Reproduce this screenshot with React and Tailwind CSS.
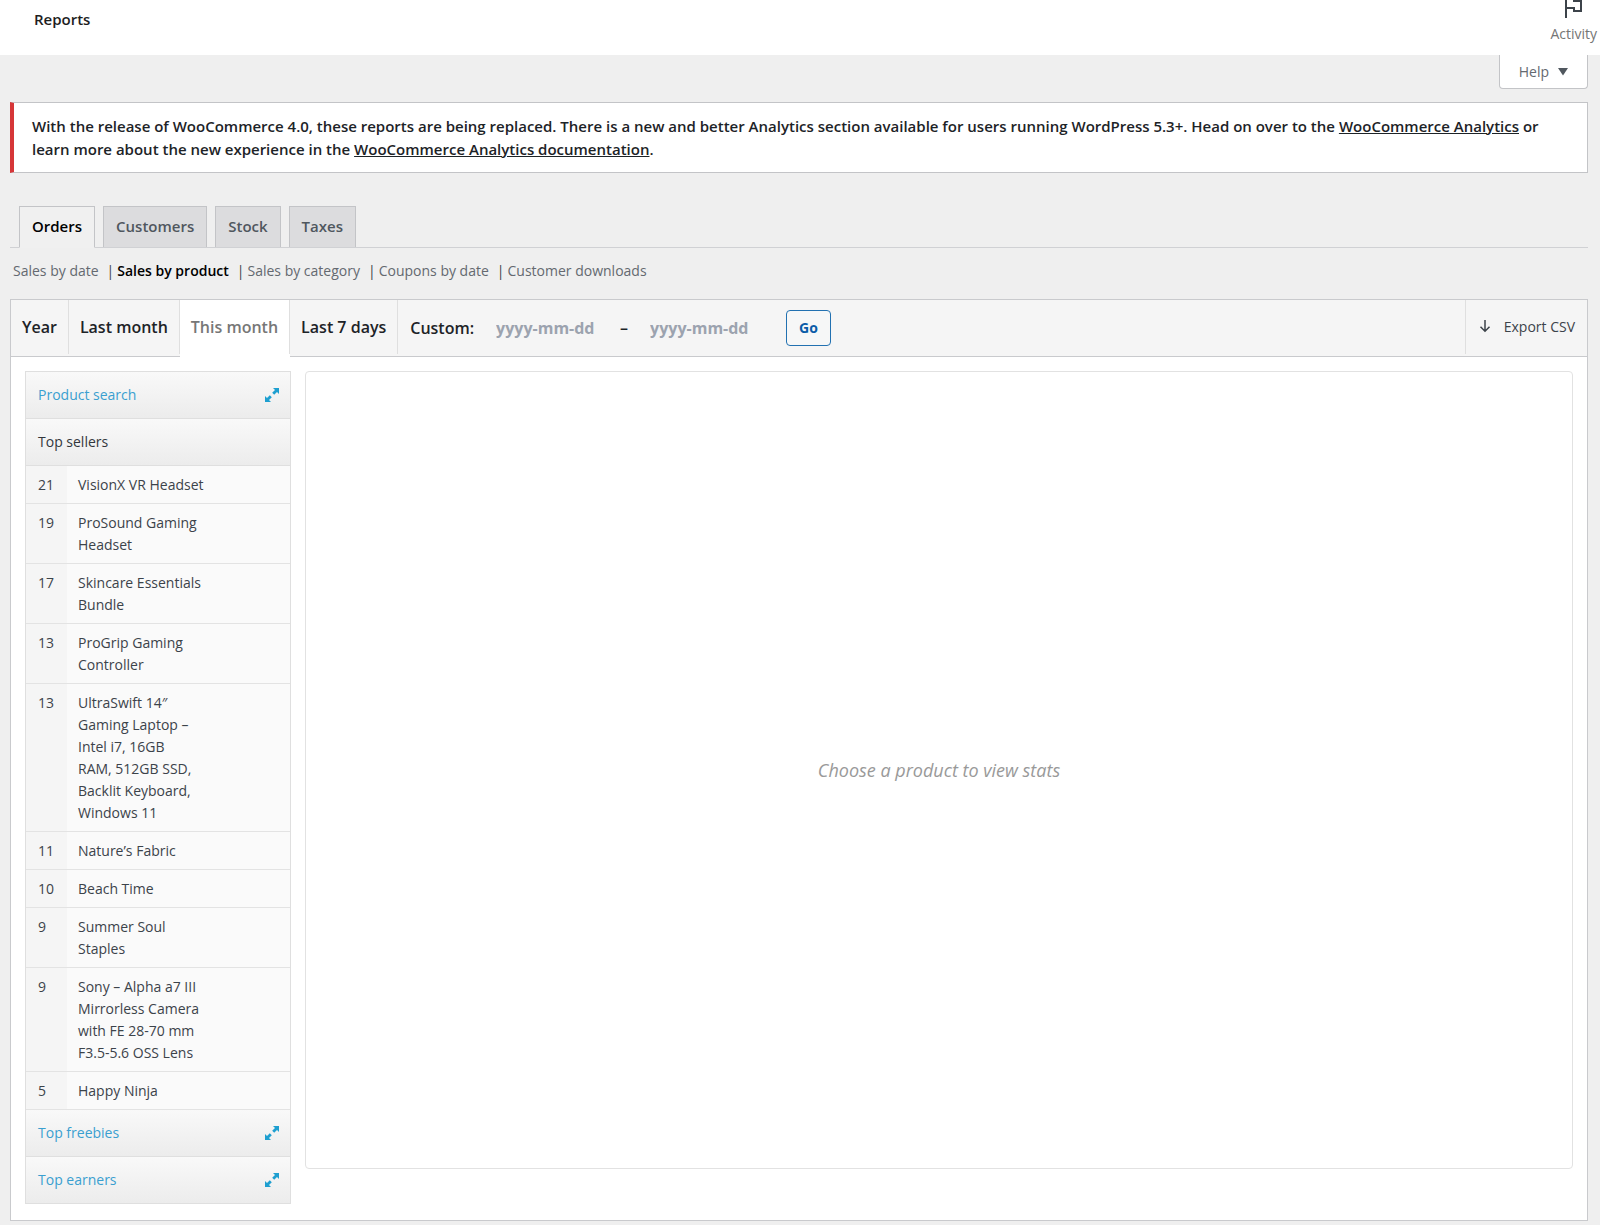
const products = [
  [21, 'VisionX VR Headset'],
  [19, 'ProSound Gaming\nHeadset'],
  [17, 'Skincare Essentials\nBundle'],
  [13, 'ProGrip Gaming\nController'],
  [13, 'UltraSwift 14″\nGaming Laptop –\nIntel i7, 16GB\nRAM, 512GB SSD,\nBacklit Keyboard,\nWindows 11'],
  [11, 'Nature’s Fabric'],
  [10, 'Beach Time'],
  [9, 'Summer Soul\nStaples'],
  [9, 'Sony – Alpha a7 III\nMirrorless Camera\nwith FE 28-70 mm\nF3.5-5.6 OSS Lens'],
  [5, 'Happy Ninja'],
];

const reports = ['Sales by date', 'Sales by product', 'Sales by category', 'Coupons by date', 'Customer downloads'];

function ExpandIcon() {
  return (
    <svg width="14" height="14" viewBox="0 0 14 14" fill="#1e9fd0" aria-hidden="true">
      <path d="M8 0h6v6l-2-2-2.800 2.800-2-2L10 2z" />
      <path d="M0 8l2 2 2.800-2.800 2 2L4 12l2 2H0z" />
    </svg>
  );
}

function SectionHeading({ children, open }) {
  return (
    <h4 className="border-b border-[#dfdfdf] bg-linear-to-b from-[#f9f9f9] to-[#ececec] text-sm">
      <button
        type="button"
        className={`flex h-[46px] w-full items-center justify-between pr-[11px] pl-3 ${open ? 'text-[#32373c]' : 'text-[#3a9fd0]'}`}
      >
        {children}
        {!open && <ExpandIcon />}
      </button>
    </h4>
  );
}

function Tab({ children, active }) {
  return (
    <a
      href="#"
      className={`flex items-center border border-[#c3c4c7] px-3 text-[15px] font-semibold ${
        active ? '-mb-px h-[42px] border-b-[#f0f0f0] bg-[#f0f0f0] text-black' : 'h-[41px] border-b-0 bg-[#dcdcde] text-[#50575e]'
      }`}
    >
      {children}
    </a>
  );
}

function Range({ children, active }) {
  return (
    <li className={active ? '-mb-px bg-white' : ''}>
      <a
        href="#"
        className={`flex h-[54px] items-center border-r border-[#dfdfdf] px-[11px] ${active ? 'text-[#777]' : 'text-[#1d2327]'}`}
      >
        {children}
      </a>
    </li>
  );
}

export default function App() {
  return (
    <div className="min-h-screen bg-[#efefef] pb-1 font-['Open_Sans','Noto_Sans',sans-serif] text-sm text-[#3c434a]">
      <header className="flex h-[55px] items-start justify-between bg-white pr-[3px] pl-[34px]">
        <h1 className="pt-[7px] text-[15px] leading-6 font-semibold text-[#1e1e1e]">Reports</h1>
        <button type="button" className="flex flex-col items-center text-[#757575]">
          <svg width="20" height="24" viewBox="0 0 20 24" fill="none" stroke="#3c434a" strokeWidth="2" aria-hidden="true">
            <path d="M2 18V-2M2 8h8v3h7V1H10V-2" />
          </svg>
          <span className="leading-5">Activity</span>
        </button>
      </header>

      <div className="flex justify-end pr-3">
        <button
          type="button"
          className="flex h-[34px] items-center gap-[9px] rounded-b border border-t-0 border-[#c3c4c7] bg-white px-[19px] text-[#646970]"
        >
          Help
          <svg width="10" height="8" viewBox="0 0 10 8" fill="#50575e" aria-hidden="true">
            <path d="M0 0h10L5 7.500z" />
          </svg>
        </button>
      </div>

      <main className="mr-3 ml-[10px]">
        <div className="mt-[13px] border border-l-4 border-[#c3c4c7] border-l-[#d63638] bg-white pt-3 pr-4 pb-[11px] pl-[18px]">
          <p className="text-[15px] leading-[23px] font-semibold text-[#1d2327]">
            With the release of WooCommerce 4.0, these reports are being replaced. There is a new and better Analytics
            section available for users running WordPress 5.3+. Head on over to the{' '}
            <a href="#" className="underline">WooCommerce Analytics</a> or
            <br />
            learn more about the new experience in the{' '}
            <a href="#" className="underline">WooCommerce Analytics documentation</a>.
          </p>
        </div>

        <nav className="mt-[33px] flex items-end gap-2 border-b border-[#d0d1d4] pl-[9px]">
          <Tab active>Orders</Tab>
          <Tab>Customers</Tab>
          <Tab>Stock</Tab>
          <Tab>Taxes</Tab>
        </nav>

        <ul className="mt-3 flex pl-[3px] leading-[22px]">
          {reports.map((name, i) => (
            <li key={name} className="flex">
              <a href="#" className={i === 1 ? 'font-semibold text-black' : 'text-[#646970]'}>{name}</a>
              {i < reports.length - 1 && <span className="pr-[3px] pl-2">|</span>}
            </li>
          ))}
        </ul>

        <section className="mt-[17px] border border-[#c9cacd] bg-white">
          <div className="flex h-[57px] justify-between border-b border-[#c9cacd] bg-[#f5f5f5] text-base">
            <ul className="flex font-semibold">
              <Range>Year</Range>
              <Range>Last month</Range>
              <Range active>This month</Range>
              <Range>Last 7 days</Range>
              <li>
                <form className="flex h-[56px] items-center pl-3 text-[#1d2327]">
                  <label htmlFor="start-date">Custom:</label>
                  <input
                    id="start-date"
                    type="text"
                    placeholder="yyyy-mm-dd"
                    className="ml-[22px] w-[110px] bg-transparent font-bold placeholder:text-[#9ca3af]"
                  />
                  <span className="mx-[14px]">–</span>
                  <input
                    type="text"
                    aria-label="End date"
                    placeholder="yyyy-mm-dd"
                    className="ml-2 w-[110px] bg-transparent font-bold placeholder:text-[#9ca3af]"
                  />
                  <button
                    type="submit"
                    className="ml-[26px] h-9 rounded border border-[#2271b1] bg-[#f6f7f7] px-3 text-sm font-bold text-[#0a5ca8]"
                  >
                    Go
                  </button>
                </form>
              </li>
            </ul>
            <a href="#" className="flex h-[54px] items-center gap-3 border-l border-[#dfdfdf] px-3 text-sm text-[#3c434a]">
              <svg width="14" height="14" viewBox="0 0 14 14" fill="none" stroke="#3c434a" strokeWidth="1.5" aria-hidden="true">
                <path d="M7 0v11M2.500 6.800L7 11.300l4.500-4.500" />
              </svg>
              Export CSV
            </a>
          </div>

          <div className="flex items-start gap-[14px] p-[14px] pb-4">
            <aside className="w-[266px] shrink-0 border border-b-0 border-[#dfdfdf]">
              <SectionHeading>Product search</SectionHeading>
              <SectionHeading open>Top sellers</SectionHeading>
              <table className="w-full border-collapse bg-[#fafafa] leading-[22px]">
                <tbody>
                  {products.map(([count, name]) => (
                    <tr key={name} className="border-b border-[#e3e3e3] align-top">
                      <td className="w-[41px] bg-[#f5f5f5] pt-2 pb-[7px] pl-3">{count}</td>
                      <td className="pt-2 pr-3 pb-[7px] pl-[11px] whitespace-pre-line">
                        <a href="#">{name}</a>
                      </td>
                    </tr>
                  ))}
                </tbody>
              </table>
              <SectionHeading>Top freebies</SectionHeading>
              <SectionHeading>Top earners</SectionHeading>
            </aside>
            <div className="flex h-[798px] grow items-center justify-center rounded border border-[#e2e2e2]">
              <p className="text-lg text-[#999] italic">Choose a product to view stats</p>
            </div>
          </div>
        </section>
      </main>
    </div>
  );
}
